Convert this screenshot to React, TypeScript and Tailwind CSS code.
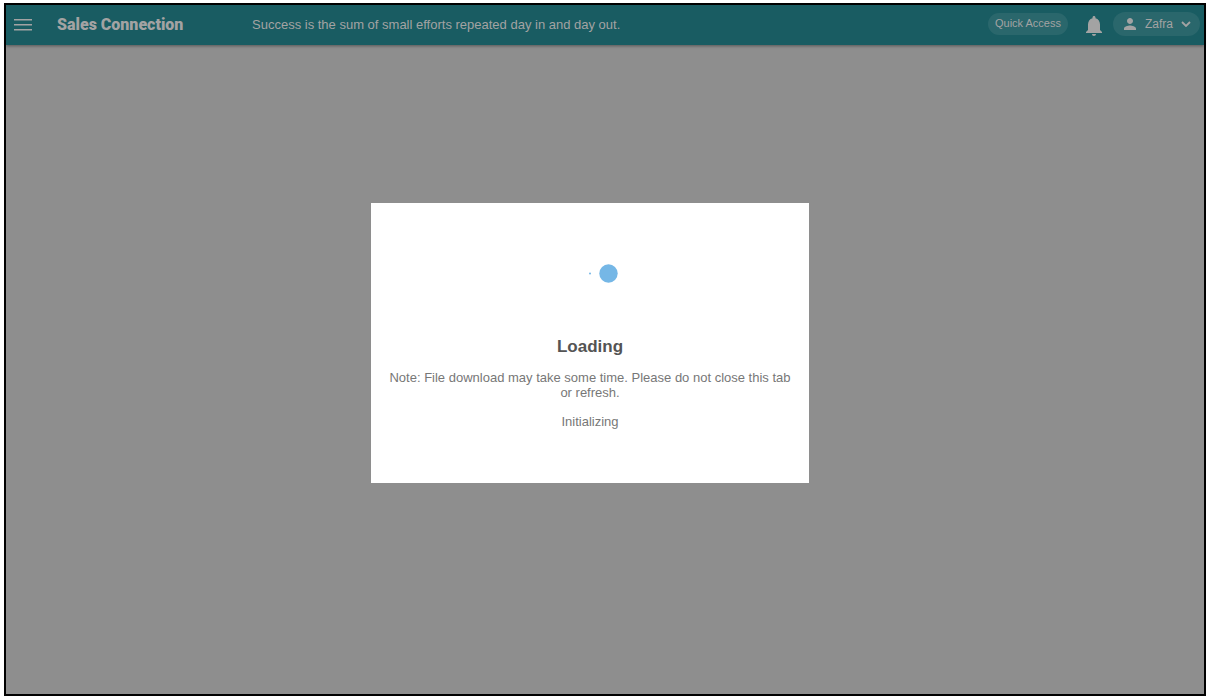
export default function App() {
  return (
    <div className="flex min-h-screen bg-white pt-[3px] pr-1.5 pb-1 pl-1 font-['Liberation_Sans',Arial,sans-serif]">
      <div className="flex grow flex-col border-2 border-black bg-[#8e8e8e]">
        <header className="z-10 flex h-10 shrink-0 items-center bg-[#195c62] pr-1 pl-2 text-[#a3a3a3] shadow-[0_1px_3px_rgba(0,0,0,0.4)]">
          <button type="button" aria-label="Menu" className="flex">
            <svg width="18" height="14" viewBox="0 0 18 14" fill="currentColor" aria-hidden="true">
              <path d="M0 1h18v1.500H0zM0 6h18v1.500H0zM0 11h18v1.500H0z" />
            </svg>
          </button>
          <h1 className="ml-[25px] w-[195px] font-[Roboto,sans-serif] text-base leading-5 font-black">Sales Connection</h1>
          <p className="text-[13px] leading-5">Success is the sum of small efforts repeated day in and day out.</p>
          <div className="ml-auto flex items-center">
            <button type="button" className="mb-0.5 h-[22px] rounded-full bg-[#2a676c] px-[7px] pb-0.5 text-[11px] leading-5">
              Quick Access
            </button>
            <button type="button" aria-label="Notifications" className="mt-0.5 ml-[18px] flex">
              <svg width="16" height="20" viewBox="0 0 16 20" fill="currentColor" aria-hidden="true">
                <path d="M8 20c1.1 0 2-.9 2-2H6c0 1.100.89 2 2 2zM14 14V8.500c0-3.070-1.640-5.640-4.500-6.320V1.500C9.500.67 8.830 0 8 0S6.500.67 6.500 1.500v.68C3.630 2.860 2 5.420 2 8.500V14l-2 2v1h16v-1z" />
              </svg>
            </button>
            <button type="button" className="mb-0.5 ml-[11px] flex h-6 items-center rounded-full bg-[#2a676c] pr-[9px] pl-[11px] text-xs">
              <svg width="12" height="12" viewBox="0 0 16 16" fill="currentColor" aria-hidden="true">
                <path d="M8 8c2.210 0 4-1.790 4-4S10.210 0 8 0 4 1.790 4 4s1.790 4 4 4zm0 2c-2.670 0-8 1.340-8 4v2h16v-2c0-2.660-5.330-4-8-4z" />
              </svg>
              <span className="ml-[9px]">Zafra</span>
              <svg className="ml-2" width="10" height="6" viewBox="0 0 10 6" fill="none" stroke="currentColor" strokeWidth="1.800" aria-hidden="true">
                <path d="M1 1l4 4 4-4" />
              </svg>
            </button>
          </div>
        </header>
        <main className="flex grow items-center justify-center pr-[30px] pb-[54px]">
          <section role="dialog" aria-labelledby="loading-title" className="flex min-h-[280px] w-[438px] flex-col items-center bg-white px-4 pt-[61px] text-center text-[13px] leading-[15px] text-[#777]">
            <svg width="56" height="19" viewBox="0 0 56 19" fill="#75b7e6" aria-hidden="true">
              <circle cx="28" cy="9.500" r="1" />
              <circle cx="46.500" cy="9.500" r="9.200" />
            </svg>
            <h2 id="loading-title" className="mt-[54px] text-[17px] leading-5 font-bold text-[#545454]">Loading</h2>
            <p className="mt-[13px]">Note: File download may take some time. Please do not close this tab or refresh.</p>
            <p className="mt-[14px]" role="status">Initializing</p>
          </section>
        </main>
      </div>
    </div>
  );
}
